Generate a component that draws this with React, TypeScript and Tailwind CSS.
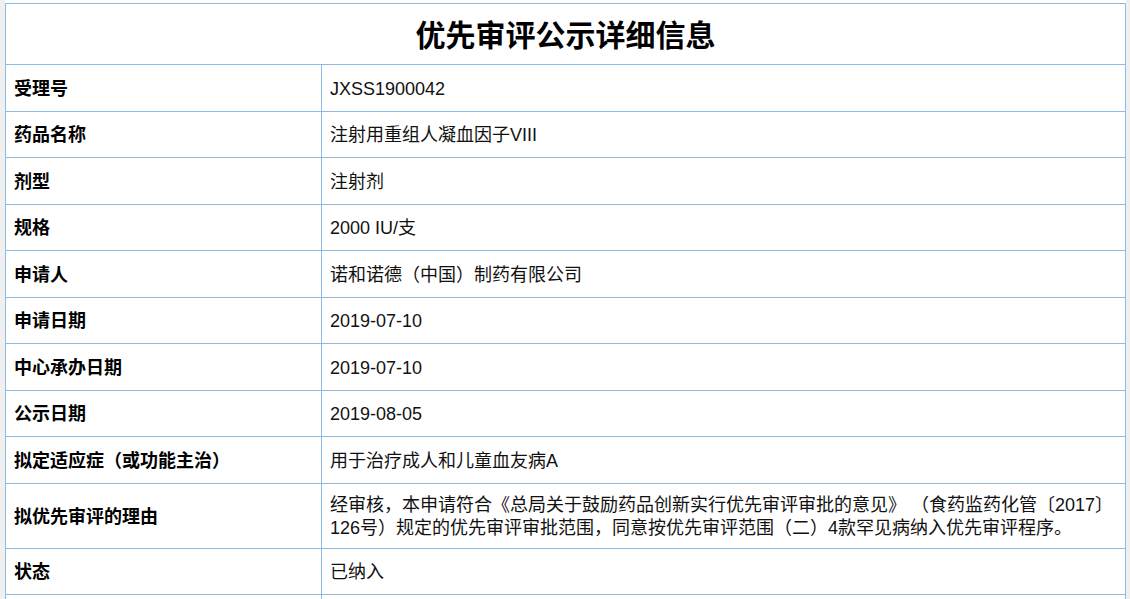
import React from 'react';

interface Row {
  label: string;
  value: React.ReactNode;
  tall?: boolean;
}

const rows: Row[] = [
  { label: '受理号', value: 'JXSS1900042' },
  { label: '药品名称', value: '注射用重组人凝血因子VIII' },
  { label: '剂型', value: '注射剂' },
  { label: '规格', value: '2000 IU/支' },
  { label: '申请人', value: '诺和诺德（中国）制药有限公司' },
  { label: '申请日期', value: '2019-07-10' },
  { label: '中心承办日期', value: '2019-07-10' },
  { label: '公示日期', value: '2019-08-05' },
  { label: '拟定适应症（或功能主治）', value: '用于治疗成人和儿童血友病A' },
  {
    label: '拟优先审评的理由',
    value: (
      <>
        经审核，本申请符合《总局关于鼓励药品创新实行优先审评审批的意见》 （食药监药化管〔2017〕
        <br />
        126号）规定的优先审评审批范围，同意按优先审评范围（二）4款罕见病纳入优先审评程序。
      </>
    ),
    tall: true,
  },
  { label: '状态', value: '已纳入' },
  { label: '', value: '' },
];

const InfoRow: React.FC<{ row: Row }> = ({ row }) => (
  <div
    className={
      'flex border-b border-[#8cbbe4] ' + (row.tall ? 'h-[65px]' : 'h-[46.5px]')
    }
  >
    <div className="w-[316px] shrink-0 flex items-center pl-[8px] pt-[3px] border-r border-[#8cbbe4] font-bold text-[18px] text-black">
      {row.label}
    </div>
    <div className="flex-1 flex items-center pl-[8px] pt-[3px] text-[18px] leading-[23px] text-[#111]">
      <div>{row.value}</div>
    </div>
  </div>
);

export default function App() {
  return (
    <div
      className="flex h-[599px] w-[1130px] overflow-hidden bg-white"
      style={{ fontFamily: '"Liberation Sans", "Noto Sans CJK SC", sans-serif' }}
    >
      {/* page gutter */}
      <div className="w-[5px] shrink-0 bg-[#f0f0f0]" />

      <div className="w-[1121px] shrink-0 pt-[3px]">
        <div className="border-[1.5px] border-[#8cbbe4] border-b-0">
          {/* ── Title ───────────────────────── */}
          <div className="h-[61px] flex items-center justify-center pt-[3px] border-b border-[#8cbbe4]">
            <h1 className="text-[30px] font-bold text-black">
              优先审评公示详细信息
            </h1>
          </div>

          {rows.map((row, i) => (
            <InfoRow key={i} row={row} />
          ))}
        </div>
      </div>

      <div className="flex-1 bg-[#f0f0f0]" />
    </div>
  );
}
